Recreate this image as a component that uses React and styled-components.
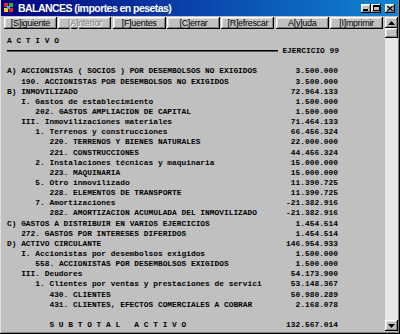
import React from "react"
import styled, { createGlobalStyle } from "styled-components"

const GlobalStyle = createGlobalStyle`
  html, body {
    margin: 0;
    padding: 0;
    background: #c0c0c0;
  }
  body {
    font-family: "Liberation Sans", Arial, sans-serif;
  }
`

const raised = `
  background: #c0c0c0;
  box-shadow: inset -1px -1px #000, inset 1px 1px #fff, inset -2px -2px #808080, inset 2px 2px #dfdfdf;
`

const Window = styled.div`
  width: 400px;
  height: 334px;
  box-sizing: border-box;
  display: flex;
  flex-direction: column;
  background: #c0c0c0;
  padding: 0 2px 3px 1px;
  box-shadow: inset -1px -1px #000, inset 1px 0 #dfdfdf, inset -2px -2px #808080;
  overflow: hidden;
`

const TitleBar = styled.div`
  height: 16px;
  flex: none;
  display: flex;
  align-items: center;
  gap: 3px;
  padding: 0 3px 0 2px;
  background: linear-gradient(90deg, #000080 0%, #0a3fa8 45%, #1084d0 100%);
  color: #fff;
`

const Title = styled.div`
  flex: 1;
  font-size: 10.5px;
  font-weight: bold;
  letter-spacing: -0.55px;
  white-space: nowrap;
`

const Controls = styled.div`
  display: flex;
  align-items: center;
`

const CtlButton = styled.div`
  ${raised}
  width: 10px;
  height: 9px;
  margin-left: ${p => (p.$gap ? "4px" : "0")};
  display: flex;
  align-items: center;
  justify-content: center;
  svg { display: block; }
`

const Body = styled.div`
  flex: 1;
  display: flex;
  margin-top: 1px;
  min-height: 0;
`

const Main = styled.div`
  flex: 1;
  min-width: 0;
  display: flex;
  flex-direction: column;
`

const Toolbar = styled.div`
  display: grid;
  grid-template-columns: repeat(7, 1fr);
  gap: 1.5px;
  padding: 0 2px 0 3px;
`

const ToolButton = styled.div`
  ${raised}
  height: 12px;
  display: flex;
  align-items: center;
  justify-content: center;
  font-size: 9px;
  letter-spacing: -0.3px;
  color: ${p => (p.disabled ? "#808080" : "#000")};
  text-shadow: ${p => (p.disabled ? "1px 1px #fff" : "none")};
`

const Report = styled.div`
  padding: 7px 0 0 6px;
  font-family: "Liberation Mono", "Courier New", monospace;
  font-size: 7.87px;
  font-weight: bold;
  line-height: 10.15px;
  color: #000;
`

const Row = styled.div`
  width: 331px;
  height: 10.15px;
  display: grid;
  grid-template-columns: 1fr auto;
  align-items: center;
  white-space: pre;
`

const Label = styled.span`
  padding-left: ${p => p.$level * 3}ch;
`

const Amount = styled.span`
  text-align: right;
`

const HeadRule = styled.div`
  display: flex;
  align-items: center;
  width: 332px;
  height: 10.15px;
  white-space: pre;
`

const Rule = styled.div`
  flex: 1;
  height: 1px;
  background: #000;
  border-bottom: 1px solid #5a5a5a;
  margin-right: 4px;
`

const ScrollBar = styled.div`
  width: 13px;
  flex: none;
  display: flex;
  flex-direction: column;
  background: #e6e6e6;
`

const ScrollButton = styled.div`
  ${raised}
  height: 11px;
  display: flex;
  align-items: center;
  justify-content: center;
`

const Thumb = styled.div`
  ${raised}
  height: 10px;
`

const Track = styled.div`
  flex: 1;
`

const AppIcon = () => (
  <svg width="12" height="12" viewBox="0 0 12 12">
    <rect x="0" y="0" width="12" height="12" fill="#000080" />
    <rect x="1" y="1" width="4" height="4" fill="#ff2020" />
    <rect x="6" y="1" width="4" height="4" fill="#20c020" />
    <rect x="1" y="6" width="4" height="4" fill="#ffe000" />
    <rect x="6" y="6" width="4" height="4" fill="#ff2020" />
    <rect x="4" y="4" width="3" height="3" fill="#20c0ff" />
  </svg>
)

const Arrow = ({ down }) => (
  <svg width="7" height="4" viewBox="0 0 7 4">
    <path d={down ? "M0 0h7L3.5 4z" : "M3.5 0L7 4H0z"} fill="#000" />
  </svg>
)

const buttons = [
  { text: "[S]iguiente" },
  { text: "[A]nterior", disabled: true },
  { text: "[F]uentes" },
  { text: "[C]errar" },
  { text: "[R]efrescar" },
  { text: "A[y]uda" },
  { text: "[I]mprimir" },
]

const lines = [
  [0, "A) ACCIONISTAS ( SOCIOS ) POR DESEMBOLSOS NO EXIGIDOS", "3.500.000"],
  [1, "190. ACCIONISTAS POR DESEMBOLSOS NO EXIGIDOS", "3.500.000"],
  [0, "B) INMOVILIZADO", "72.964.133"],
  [1, "I. Gastos de establecimiento", "1.500.000"],
  [2, "202. GASTOS AMPLIACION DE CAPITAL", "1.500.000"],
  [1, "III. Inmovilizaciones materiales", "71.464.133"],
  [2, "1. Terrenos y construcciones", "66.456.324"],
  [3, "220. TERRENOS Y BIENES NATURALES", "22.000.000"],
  [3, "221. CONSTRUCCIONES", "44.456.324"],
  [2, "2. Instalaciones técnicas y maquinaria", "15.000.000"],
  [3, "223. MAQUINARIA", "15.000.000"],
  [2, "5. Otro inmovilizado", "11.390.725"],
  [3, "228. ELEMENTOS DE TRANSPORTE", "11.390.725"],
  [2, "7. Amortizaciones", "-21.382.916"],
  [3, "282. AMORTIZACION ACUMULADA DEL INMOVILIZADO", "-21.382.916"],
  [0, "C) GASTOS A DISTRIBUIR EN VARIOS EJERCICIOS", "1.454.514"],
  [1, "272. GASTOS POR INTERESES DIFERIDOS", "1.454.514"],
  [0, "D) ACTIVO CIRCULANTE", "146.954.933"],
  [1, "I. Accionistas por desembolsos exigidos", "1.500.000"],
  [2, "558. ACCIONISTAS POR DESEMBOLSOS EXIGIDOS", "1.500.000"],
  [1, "III. Deudores", "54.173.900"],
  [2, "1. Clientes por ventas y prestaciones de servici", "53.148.367"],
  [3, "430. CLIENTES", "50.980.289"],
  [3, "431. CLIENTES, EFECTOS COMERCIALES A COBRAR", "2.168.078"],
  [0, "", ""],
  [3, "S U B T O T A L   A C T I V O", "132.567.014"],
]

export default function App() {
  return (
    <>
      <GlobalStyle />
      <Window>
        <TitleBar>
          <AppIcon />
          <Title>BALANCES (importes en pesetas)</Title>
          <Controls>
            <CtlButton>
              <svg width="6" height="6" viewBox="0 0 6 6"><rect x="0" y="4" width="5" height="2" fill="#000" /></svg>
            </CtlButton>
            <CtlButton>
              <svg width="7" height="6" viewBox="0 0 7 6"><path d="M0 0h7v6H0z M1 2v3h5V2z" fill="#000" fillRule="evenodd" /></svg>
            </CtlButton>
            <CtlButton $gap>
              <svg width="6" height="5" viewBox="0 0 6 5"><path d="M0 0L6 5M6 0L0 5" stroke="#000" strokeWidth="1.3" /></svg>
            </CtlButton>
          </Controls>
        </TitleBar>
        <Body>
          <Main>
            <Toolbar>
              {buttons.map(b => (
                <ToolButton key={b.text} disabled={b.disabled}>{b.text}</ToolButton>
              ))}
            </Toolbar>
            <Report>
              <Row><Label $level={0}>A C T I V O</Label><Amount /></Row>
              <HeadRule><Rule /><span>EJERCICIO 99</span></HeadRule>
              <Row />
              {lines.map(([level, text, amount], i) => (
                <Row key={i}>
                  <Label $level={level}>{text}</Label>
                  <Amount>{amount}</Amount>
                </Row>
              ))}
            </Report>
          </Main>
          <ScrollBar>
            <ScrollButton><Arrow /></ScrollButton>
            <Thumb />
            <Track />
            <ScrollButton><Arrow down /></ScrollButton>
          </ScrollBar>
        </Body>
      </Window>
    </>
  )
}
